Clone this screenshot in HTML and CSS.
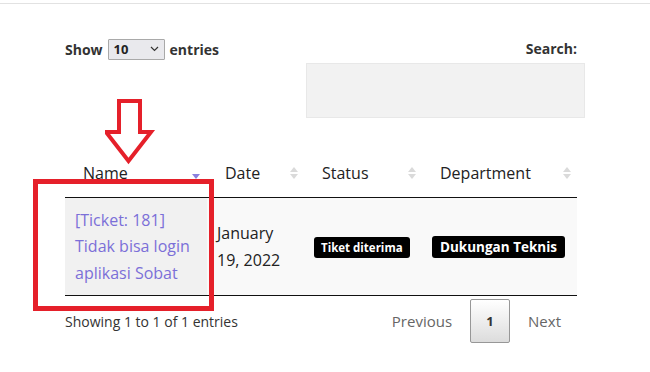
FILE: index.html
```html
<!DOCTYPE html>
<html>
<head>
<meta charset="utf-8">
<link rel="stylesheet" href="styles.css">
</head>
<body>
<div class="topline"></div>
<div class="wrap">
  <div class="controls">
    <div class="length">Show <span class="select"><span class="val">10</span><svg class="chev" width="9" height="6" viewBox="0 0 9 6"><path d="M1 1 L4.5 4.5 L8 1" fill="none" stroke="#333" stroke-width="1.2"/></svg></span> entries</div>
    <div class="search">
      <div class="search-label">Search:</div>
      <div class="search-input"></div>
    </div>
  </div>
  <table class="dt">
    <colgroup><col class="c1"><col class="c2"><col class="c3"><col class="c4"></colgroup>
    <thead>
      <tr>
        <th class="sorted">Name<span class="sort-desc"></span></th>
        <th>Date<span class="sort-both"></span></th>
        <th>Status<span class="sort-both"></span></th>
        <th>Department<span class="sort-both"></span></th>
      </tr>
    </thead>
    <tbody>
      <tr>
        <td class="name"><a>[Ticket: 181] Tidak bisa login aplikasi Sobat</a></td>
        <td class="date">January 19, 2022</td>
        <td><span class="badge sm">Tiket diterima</span></td>
        <td><span class="badge">Dukungan Teknis</span></td>
      </tr>
    </tbody>
  </table>
  <div class="footer">
    <div class="info">Showing 1 to 1 of 1 entries</div>
    <div class="paging">
      <span class="pg">Previous</span>
      <span class="pg-btn">1</span>
      <span class="pg">Next</span>
    </div>
  </div>
</div>
<div class="mark-rect"></div>
<svg class="mark-arrow" width="60" height="80" viewBox="0 0 60 80">
  <polygon points="14,3 35,3 35,34 46,34 23.5,63 1,34 14,34" fill="none" stroke="#e5202a" stroke-width="4" stroke-linejoin="miter"/>
</svg>
</body>
</html>
```
FILE: styles.css
```css
html, body {
  margin: 0;
  padding: 0;
  background: #fff;
  font-family: "Open Sans", "Liberation Sans", sans-serif;
  color: #222;
}
.topline {
  height: 3px;
  border-bottom: 1px solid #e2e2e2;
}
.wrap {
  width: 512px;
  margin-left: 65px;
}
.controls {
  display: flex;
  justify-content: space-between;
  padding-top: 32px;
  height: 111px;
}
.length {
  font-size: 14px;
  font-weight: 700;
  color: #333;
  display: flex;
  align-items: center;
  gap: 5px;
  height: 20px;
  margin-top: 3px;
}
.select {
  display: inline-flex;
  align-items: center;
  justify-content: space-between;
  box-sizing: border-box;
  width: 57px;
  height: 21px;
  padding: 0 5px 0 5px;
  border: 1px solid #a9a9a9;
  background: #e9e9ed;
  border-radius: 1px;
}
.select .val {
  font-size: 13px;
  font-weight: 700;
  color: #222;
}
.search {
  display: flex;
  flex-direction: column;
  align-items: flex-end;
  margin-right: -8px;
}
.search-label {
  font-size: 14px;
  font-weight: 700;
  color: #333;
  margin-right: 8px;
  height: 20px;
  line-height: 20px;
  margin-top: 3px;
}
.search-input {
  margin-top: 4px;
  width: 277px;
  height: 53px;
  background: #f2f2f2;
  border: 1px solid #e8e8e8;
}
.dt {
  border-collapse: collapse;
  width: 512px;
  table-layout: fixed;
  margin-top: 1px;
}
.c1 { width: 142px; }
.c2 { width: 97px; }
.c3 { width: 118px; }
.c4 { width: 155px; }
.dt th {
  position: relative;
  text-align: left;
  font-weight: 400;
  font-size: 16px;
  color: #222;
  padding: 0 18px;
  height: 49px;
  border-bottom: 1px solid #111;
  vertical-align: middle;
  white-space: nowrap;
}
.sort-both {
  position: absolute;
  right: 6px;
  top: 17px;
  width: 8px;
  height: 16px;
}
.sort-both::before, .sort-both::after {
  content: "";
  position: absolute;
  left: 0;
  border-left: 4px solid transparent;
  border-right: 4px solid transparent;
}
.sort-both::before {
  top: 2px;
  border-bottom: 5px solid #dadada;
}
.sort-both::after {
  top: 9px;
  border-top: 5px solid #dadada;
}
.sort-desc {
  position: absolute;
  right: 7px;
  top: 26px;
  width: 0;
  height: 0;
  border-left: 4px solid transparent;
  border-right: 4px solid transparent;
  border-top: 5px solid #8a80de;
}
.dt tbody tr {
  background: #f9f9f9;
}
.dt td {
  padding: 8px 10px;
  height: 81px;
  vertical-align: middle;
  border-bottom: 1px solid #111;
  font-size: 16px;
  line-height: 26.5px;
}
.dt td.name {
  background: #f1f1f1;
  padding-right: 8px;
}
.name a {
  color: #7b6fd8;
  text-decoration: none;
}
.date {
  color: #222;
}
.badge {
  display: inline-block;
  background: #000;
  color: #fff;
  font-weight: 700;
  font-size: 13.5px;
  line-height: 22px;
  padding: 0 8px;
  border-radius: 3px;
  white-space: nowrap;
}
.badge.sm {
  font-size: 11.5px;
  line-height: 21px;
  padding: 0 7px;
}
.footer {
  display: flex;
  justify-content: space-between;
  align-items: center;
  margin-top: 3px;
}
.info {
  font-size: 14px;
  color: #333;
}
.paging {
  display: flex;
  align-items: center;
}
.pg {
  font-size: 15px;
  color: #666;
  padding: 0 18px;
}
.pg:last-child {
  padding-right: 16px;
}
.pg-btn {
  box-sizing: border-box;
  width: 40px;
  height: 44px;
  display: flex;
  align-items: center;
  justify-content: center;
  border: 1px solid #979797;
  border-radius: 2px;
  background: linear-gradient(#fff, #dcdcdc);
  font-size: 13px;
  font-weight: 700;
  color: #333;
}
.mark-rect {
  position: absolute;
  left: 33px;
  top: 179px;
  width: 171px;
  height: 122px;
  border: 5px solid #e5202a;
}
.mark-arrow {
  position: absolute;
  left: 105px;
  top: 98px;
}
```
